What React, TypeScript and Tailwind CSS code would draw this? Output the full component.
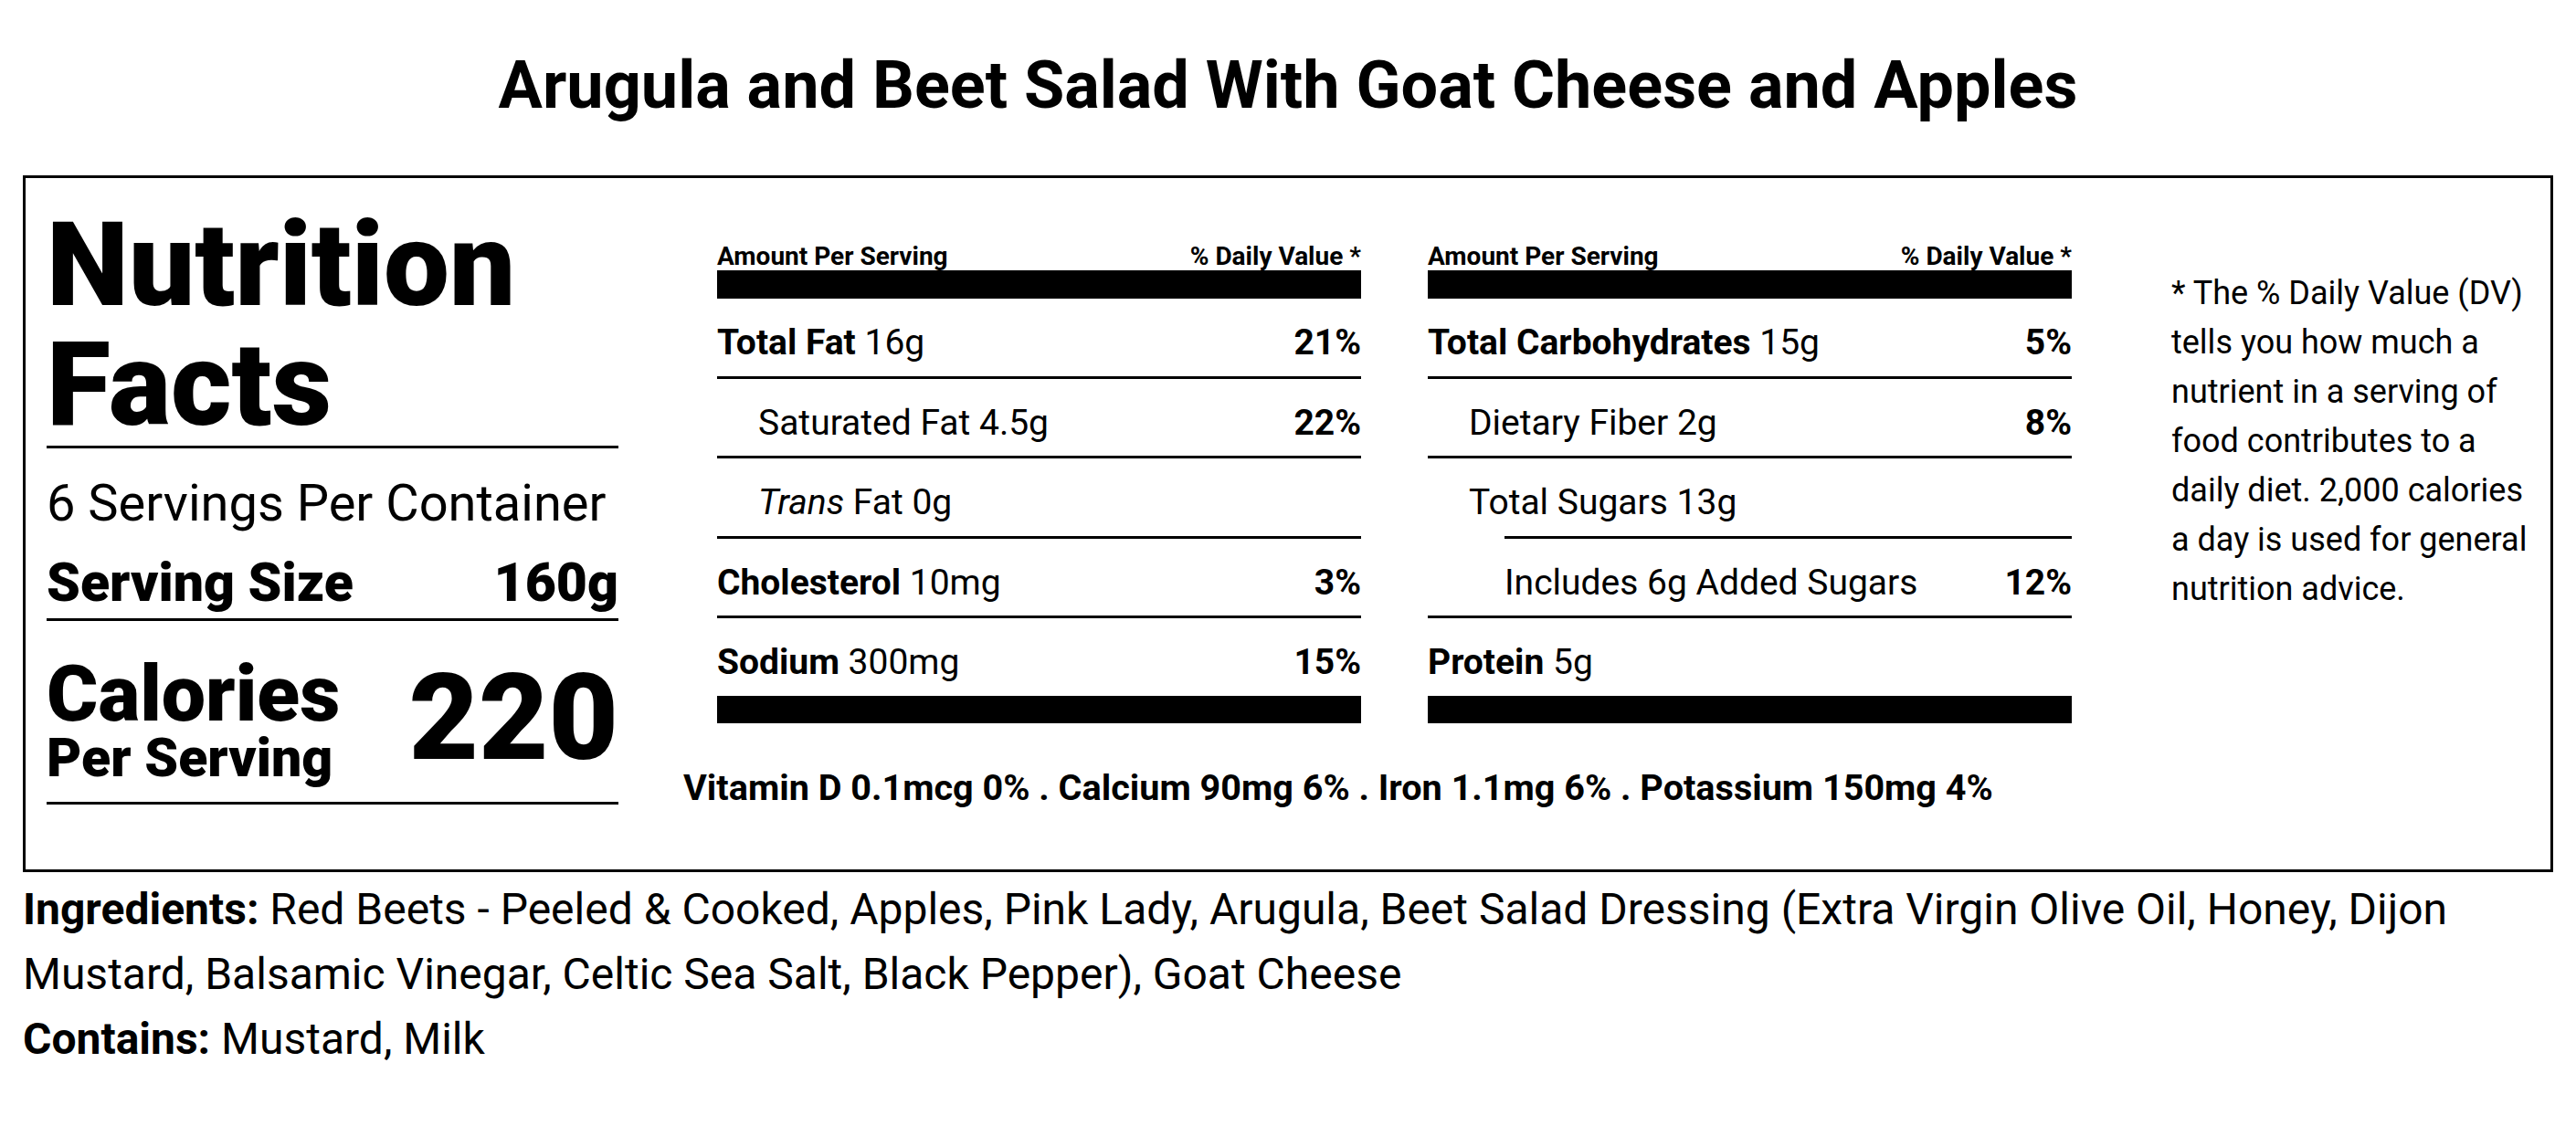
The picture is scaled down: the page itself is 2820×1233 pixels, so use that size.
import React from "react";

type Row = {
  label: React.ReactNode;
  dv?: string;
  indent?: "none" | "one" | "two";
  bar?: boolean;
  noBorder?: boolean;
};

function NutrientTable({ rows }: { rows: Row[] }) {
  return (
    <div className="flex w-[705px] flex-col">
      <div className="flex justify-between text-[28px] font-bold leading-[31px]">
        <span>Amount Per Serving</span>
        <span>% Daily Value *</span>
      </div>
      <div className="h-[31px] bg-black" />
      {rows.map((r, i) => (
        <React.Fragment key={i}>
          <div
            className={
              "flex justify-between pt-[20px] pb-[7.5px] text-[39px] leading-[57px] " +
              (r.noBorder ? "" : r.bar ? "border-b-[30px] border-black " : "border-b-[3px] border-black ") +
              (r.indent === "one" ? "pl-[45px]" : r.indent === "two" ? "pl-[84px]" : "")
            }
          >
            <span>{r.label}</span>
            {r.dv ? <span className="font-bold">{r.dv}</span> : null}
          </div>
          {r.noBorder ? <div className="ml-[84px] h-[3px] bg-black" /> : null}
        </React.Fragment>
      ))}
    </div>
  );
}

export default function App() {
  const left: Row[] = [
    { label: <><b>Total Fat</b> 16g</>, dv: "21%" },
    { label: <>Saturated Fat 4.5g</>, dv: "22%", indent: "one" },
    { label: <><i>Trans</i> Fat 0g</>, indent: "one" },
    { label: <><b>Cholesterol</b> 10mg</>, dv: "3%" },
    { label: <><b>Sodium</b> 300mg</>, dv: "15%", bar: true },
  ];
  const right: Row[] = [
    { label: <><b>Total Carbohydrates</b> 15g</>, dv: "5%" },
    { label: <>Dietary Fiber 2g</>, dv: "8%", indent: "one" },
    { label: <>Total Sugars 13g</>, indent: "one", noBorder: true },
    { label: <>Includes 6g Added Sugars</>, dv: "12%", indent: "two" },
    { label: <><b>Protein</b> 5g</>, bar: true },
  ];

  return (
    <div className="min-h-[1233px] w-[2820px] bg-white text-black" style={{ fontFamily: "Roboto, 'Noto Sans', sans-serif" }}>
      <h1 className="pt-[51px] text-center text-[72px] font-bold leading-[86px]">
        Arugula and Beet Salad With Goat Cheese and Apples
      </h1>

      <div className="mx-[25px] mt-[55px] flex h-[763px] border-[3px] border-black pl-[23px] pt-[30px]">
        {/* left column */}
        <div className="flex w-[626px] flex-col">
          <div className="text-[128px] font-black leading-[131px]">
            Nutrition
            <br />
            Facts
          </div>
          <div className="mt-[1px] h-[3px] bg-black" />
          <div className="mt-[18px] text-[56px] leading-[84px]">6 Servings Per Container</div>
          <div className="mt-[10px] flex justify-between border-b-[3px] border-black pb-[4px] text-[59px] font-black leading-[70px]">
            <span>Serving Size</span>
            <span>160g</span>
          </div>
          <div className="flex items-start justify-between border-b-[3px] border-black pt-[40px] pb-[19px]">
            <div className="flex flex-col">
              <span className="text-[86px] font-black leading-[80px]">Calories</span>
              <span className="text-[59px] font-black leading-[59px]">Per Serving</span>
            </div>
            <span className="text-[132px] font-black leading-[132px]">220</span>
          </div>
        </div>

        {/* middle */}
        <div className="ml-[108px] mt-[40px] flex flex-col">
          <div className="flex gap-[73px]">
            <NutrientTable rows={left} />
            <NutrientTable rows={right} />
          </div>
          <div className="-ml-[37px] mt-[41px] whitespace-nowrap text-[39.6px] font-bold leading-[60px]">
            Vitamin D 0.1mcg 0% . Calcium 90mg 6% . Iron 1.1mg 6% . Potassium 150mg 4%
          </div>
        </div>

        {/* footnote */}
        <div className="ml-[109px] mt-[69px] w-[400px] text-[36px] leading-[54px]">
          * The % Daily Value (DV) tells you how much a nutrient in a serving of food contributes to a daily diet. 2,000 calories a day is used for general nutrition advice.
        </div>
      </div>

      <div className="px-[25px] pt-[5px] text-[48px] leading-[71px]">
        <p>
          <b>Ingredients:</b> Red Beets - Peeled &amp; Cooked, Apples, Pink Lady, Arugula, Beet Salad Dressing (Extra Virgin Olive Oil, Honey, Dijon Mustard, Balsamic Vinegar, Celtic Sea Salt, Black Pepper), Goat Cheese
        </p>
        <p>
          <b>Contains:</b> Mustard, Milk
        </p>
      </div>
    </div>
  );
}
